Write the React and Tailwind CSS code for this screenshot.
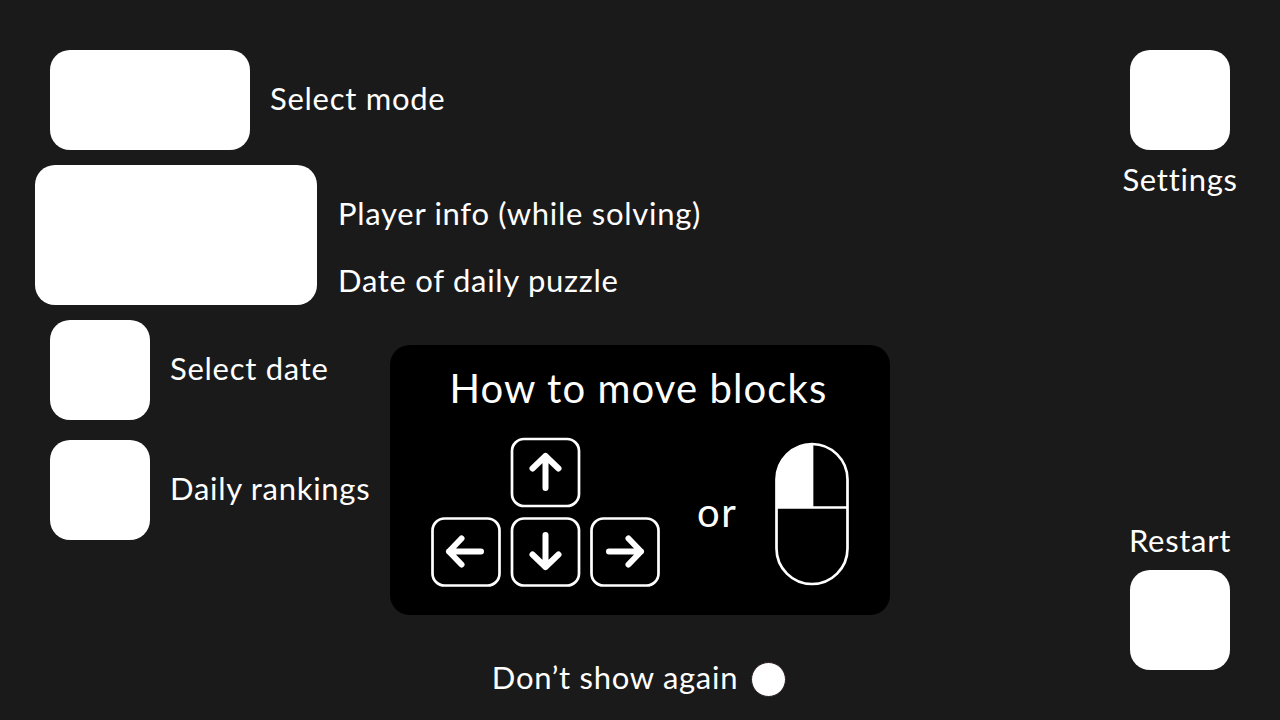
import React from 'react';

const Box = ({ className }) => <div className={`bg-white shrink-0 ${className}`} />;

const Label = ({ children, className = '' }) => (
  <span className={`text-white text-[31px] leading-[38px] tracking-[0.72px] whitespace-nowrap ${className}`}>{children}</span>
);

const Arrow = ({ d }) => (
  <path d={d} fill="none" stroke="white" strokeWidth="6" strokeLinecap="round" strokeLinejoin="round" />
);

const Keys = () => (
  <svg width="230" height="152" viewBox="430 436 230 152" className="shrink-0">
    <g fill="none" stroke="white" strokeWidth="2.7">
      <rect x="512" y="439" width="67" height="67" rx="12" />
      <rect x="432.5" y="518.5" width="67" height="67" rx="12" />
      <rect x="512" y="518.5" width="67" height="67" rx="12" />
      <rect x="591.5" y="518.5" width="67" height="67" rx="12" />
    </g>
    <Arrow d="M545.5 488V456M532.5 468.5l13-12.5l13 12.5" />
    <Arrow d="M545.5 535V567M532.5 554.5l13 12.5l13-12.5" />
    <Arrow d="M481 551.5H449M461.5 538.5l-12.5 13l12.5 13" />
    <Arrow d="M609 551.5H641M628.5 538.5l12.5 13l-12.5 13" />
  </svg>
);

const Mouse = () => (
  <svg width="76" height="144" viewBox="774 442 76 144" className="shrink-0 mt-[4px]">
    <path d="M812 507.5H776.5V479.5A35.5 35.5 0 0 1 812 444Z" fill="white" />
    <rect x="776.5" y="444" width="71" height="140" rx="35.5" fill="none" stroke="white" strokeWidth="2.7" />
    <path d="M776.5 507.5H847.5M812 444V507.5" fill="none" stroke="white" strokeWidth="2.7" />
  </svg>
);

export default function App() {
  return (
    <div className="h-screen w-full overflow-hidden bg-[#1a1a1a] flex justify-between font-['Lato',sans-serif]">
      <div className="flex flex-col pl-[35px] pt-[50px]">
        <div className="flex items-center gap-5 pl-[15px]">
          <Box className="w-[200px] h-[100px] rounded-[20px]" />
          <Label className="-mt-[5px]">Select mode</Label>
        </div>
        <div className="flex items-center gap-[21px] mt-[15px]">
          <Box className="w-[282px] h-[140px] rounded-[20px]" />
          <div className="flex flex-col gap-[29px] mt-[22px]">
            <Label>Player info (while solving)</Label>
            <Label>Date of daily puzzle</Label>
          </div>
        </div>
        <div className="flex mt-[15px]">
          <div className="w-[355px] pl-[15px] flex flex-col gap-5">
            <div className="flex items-center gap-5">
              <Box className="w-[100px] h-[100px] rounded-[20px]" />
              <Label className="-mt-[5px]">Select date</Label>
            </div>
            <div className="flex items-center gap-5">
              <Box className="w-[100px] h-[100px] rounded-[20px]" />
              <Label className="-mt-[5px]">Daily rankings</Label>
            </div>
          </div>
          <div className="flex flex-col items-center mt-[25px]">
            <div className="w-[500px] h-[270px] rounded-[20px] bg-black flex flex-col">
              <div className="text-white text-[40px] leading-[48px] tracking-[1.1px] text-center pt-[19px] pr-[3px]">How to move blocks</div>
              <div className="flex items-center pl-[40px] mt-[24px]">
                <Keys />
                <span className="text-white text-[40px] leading-[48px] tracking-[1.5px] ml-[37px] w-[77px]">or</span>
                <Mouse />
              </div>
            </div>
            <div className="flex items-center mt-[45px] pr-[2px]">
              <Label className="-mt-[4px]">Don’t show again</Label>
              <span className="w-[35px] h-[35px] mt-[2px] ml-[13px] rounded-full bg-white border border-[#2a1c1c]" />
            </div>
          </div>
        </div>
      </div>
      <div className="w-[100px] mr-[50px] py-[50px] flex flex-col items-center justify-between">
        <div className="flex flex-col items-center gap-[10px]">
          <Box className="w-[100px] h-[100px] rounded-[20px]" />
          <Label>Settings</Label>
        </div>
        <div className="flex flex-col items-center gap-[11px]">
          <Label>Restart</Label>
          <Box className="w-[100px] h-[100px] rounded-[20px]" />
        </div>
      </div>
    </div>
  );
}
